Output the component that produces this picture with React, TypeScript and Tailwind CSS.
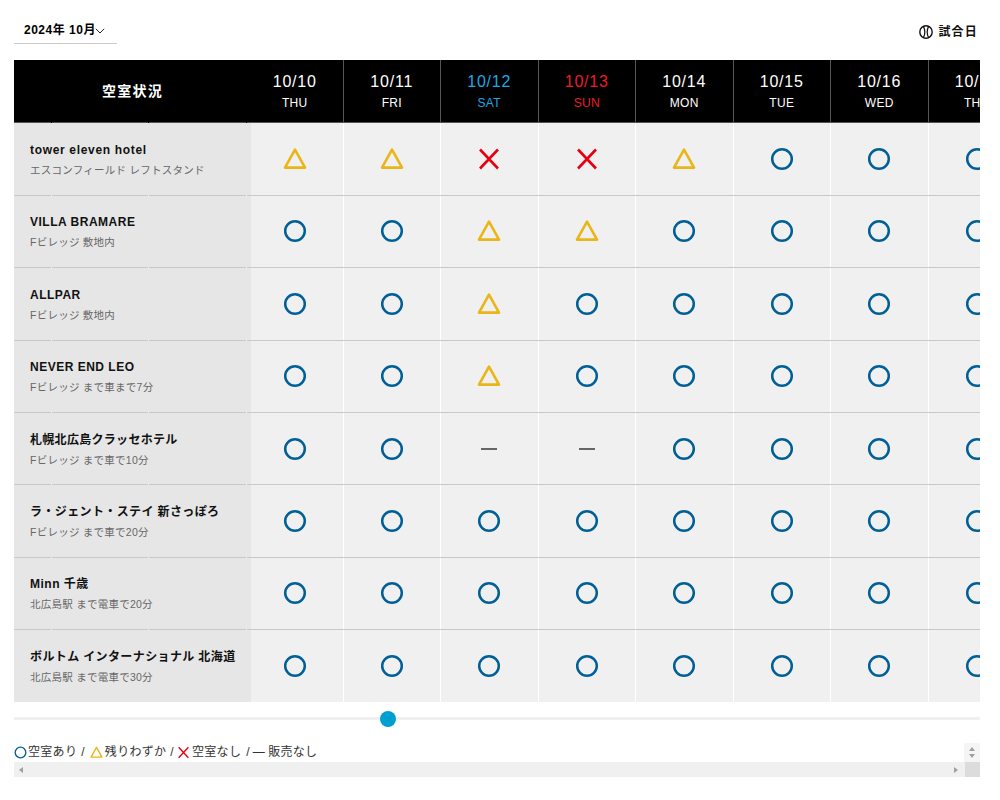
import React from 'react';

const FONT = "font-['Liberation_Sans','Noto_Sans_CJK_JP',sans-serif]";

type S = 'o' | 't' | 'x' | '-';

const days = [
  { d: '10/10', w: 'THU', c: 'text-white' },
  { d: '10/11', w: 'FRI', c: 'text-white' },
  { d: '10/12', w: 'SAT', c: 'text-[#1fa8e6]' },
  { d: '10/13', w: 'SUN', c: 'text-[#ee1c25]' },
  { d: '10/14', w: 'MON', c: 'text-white' },
  { d: '10/15', w: 'TUE', c: 'text-white' },
  { d: '10/16', w: 'WED', c: 'text-white' },
  { d: '10/17', w: 'THU', c: 'text-white' },
];

const hotels: { name: string; sub: string; t: string; s: S[] }[] = [
  { name: 'tower eleven hotel', t: 'tracking-[0.67px]', sub: 'エスコンフィールド レフトスタンド', s: ['t', 't', 'x', 'x', 't', 'o', 'o', 'o'] },
  { name: 'VILLA BRAMARE', t: 'tracking-[0.5px]', sub: 'Fビレッジ 敷地内', s: ['o', 'o', 't', 't', 'o', 'o', 'o', 'o'] },
  { name: 'ALLPAR', t: 'tracking-[0.5px]', sub: 'Fビレッジ 敷地内', s: ['o', 'o', 't', 'o', 'o', 'o', 'o', 'o'] },
  { name: 'NEVER END LEO', t: 'tracking-[0.5px]', sub: 'Fビレッジ まで車まで7分', s: ['o', 'o', 't', 'o', 'o', 'o', 'o', 'o'] },
  { name: '札幌北広島クラッセホテル', t: 'tracking-[0.3px]', sub: 'Fビレッジ まで車で10分', s: ['o', 'o', '-', '-', 'o', 'o', 'o', 'o'] },
  { name: 'ラ・ジェント・ステイ 新さっぽろ', t: 'tracking-[0.38px]', sub: 'Fビレッジ まで車で20分', s: ['o', 'o', 'o', 'o', 'o', 'o', 'o', 'o'] },
  { name: 'Minn 千歳', t: 'tracking-[0.5px]', sub: '北広島駅 まで電車で20分', s: ['o', 'o', 'o', 'o', 'o', 'o', 'o', 'o'] },
  { name: 'ボルトム インターナショナル 北海道', t: 'tracking-[0.38px]', sub: '北広島駅 まで電車で30分', s: ['o', 'o', 'o', 'o', 'o', 'o', 'o', 'o'] },
];

function Mark({ s, size = 24 }: { s: S; size?: number }) {
  if (s === 'o')
    return (
      <svg width={size} height={size} viewBox="0 0 24 24" fill="none" className="block">
        <circle cx="12" cy="12" r="9.8" stroke="#005f96" strokeWidth="2.5" />
      </svg>
    );
  if (s === 't')
    return (
      <svg width={size} height={size} viewBox="0 0 24 24" fill="none" className="block">
        <path d="M12 2.6 L22 20.6 H2 Z" stroke="#eab516" strokeWidth="2.6" strokeLinejoin="round" />
      </svg>
    );
  if (s === 'x')
    return (
      <svg width={size} height={size} viewBox="0 0 24 24" fill="none" className="block">
        <path d="M3 2.5 L21 21.5 M21 2.5 L3 21.5" stroke="#e60012" strokeWidth="2.6" />
      </svg>
    );
  return <div className="w-[16px] h-[2px] bg-[#666]" />;
}

function Ball() {
  return (
    <svg width="14" height="14" viewBox="0 0 14 14" fill="none" className="block">
      <circle cx="7" cy="7" r="6.2" stroke="#111" strokeWidth="1.4" />
      <path d="M4.4 1.4 C6 4.5 6 9.5 4.4 12.6 M9.6 1.4 C8 4.5 8 9.5 9.6 12.6" stroke="#111" strokeWidth="1.2" />
    </svg>
  );
}

function Ticks({ c }: { c: string }) {
  return (
    <div className="absolute left-0 right-0 -bottom-px h-px">
      <div className={`absolute left-[37px] top-0 w-px h-px ${c}`} />
      <div className={`absolute left-[134px] top-0 w-px h-px ${c}`} />
      <div className={`absolute left-[232px] top-0 w-px h-px ${c}`} />
    </div>
  );
}

export default function App() {
  return (
    <div className={`${FONT} w-[1000px] h-[800px] bg-white overflow-hidden pl-[14px] pr-[20px] text-[#111]`}>
      <div className="flex items-start justify-between h-[60px]">
        <div className="w-[103px] h-[44px] border-b border-[#ccc] pl-[10px] pt-[17px] flex items-center font-bold text-[12px] tracking-[0.5px] text-black">
          <span className="leading-[16px]">2024年 10月</span>
          <svg width="10" height="6" viewBox="0 0 10 6" fill="none" className="ml-[-0.5px] mt-[2px]">
            <path d="M0.8 0.8 L5 5 L9.2 0.8" stroke="#222" strokeWidth="1" />
          </svg>
        </div>
        <div className="flex items-center gap-[5px] font-bold text-[12px] tracking-[1.2px] mt-[24px] mr-[2px]">
          <Ball />
          <span className="leading-[16px]">試合日</span>
        </div>
      </div>

      <div className="overflow-hidden">
        <div className="flex w-[1100px] h-[63.4px] bg-black border-b border-[#555]">
          <div className="relative w-[237px] shrink-0 flex items-center justify-center text-white font-bold text-[14px] tracking-[1.3px]">
            空室状況
            <Ticks c="bg-black" />
          </div>
          {days.map((d, i) => (
            <div
              key={d.d}
              className={`shrink-0 flex flex-col items-center border-r border-[#555] pt-[12px] ${d.c} ${
                i === 0 ? 'w-[92.5px] pr-[4px]' : 'w-[97.5px]'
              }`}
            >
              <div className="text-[16px] leading-[20px] tracking-[0.8px]">{d.d}</div>
              <div className="text-[12px] leading-[14px] mt-[4px] tracking-[0.3px]">{d.w}</div>
            </div>
          ))}
        </div>

        {hotels.map((h, r) => (
          <div key={h.name} className={`flex w-[1100px] ${r < 7 ? 'h-[72.4px] border-b border-[#c8c8c8]' : 'h-[72px]'}`}>
            <div className="relative w-[237px] shrink-0 bg-[#e6e6e6] pl-[16px] pt-[1px] flex flex-col justify-center">
              <div className={`font-bold text-[12px] leading-[16px] text-[#111] whitespace-nowrap ${h.t}`}>{h.name}</div>
              <div className="text-[10.5px] leading-[14px] mt-[5px] tracking-[0.25px] text-[#666] whitespace-nowrap">{h.sub}</div>
              {r < 7 && <Ticks c="bg-[#f2f2f2]" />}
            </div>
            {h.s.map((s, i) => (
              <div
                key={i}
                className={`shrink-0 bg-[#f0f0f0] border-r border-white flex items-center justify-center ${
                  i === 0 ? 'w-[92.5px] pr-[4px]' : 'w-[97.5px]'
                }`}
              >
                <Mark s={s} />
              </div>
            ))}
          </div>
        ))}
      </div>

      <div className="relative mt-[15px] h-[3px] bg-[#f0f0f0]">
        <div className="absolute left-[366px] -top-[6px] w-[16px] h-[16px] rounded-full bg-[#009fd1]" />
      </div>

      <div className="relative mt-[23px] h-[34px]">
        <div className="flex items-center h-[19px] pb-[1px] text-[12px] text-[#333] tracking-[0.3px] whitespace-nowrap">
          <span className="mr-[1px]"><Mark s="o" size={13} /></span>
          <span>空室あり</span>
          <span className="ml-[4px]">/</span>
          <span className="ml-[5px] mr-[2px]"><Mark s="t" size={13} /></span>
          <span>残りわずか</span>
          <span className="ml-[4px]">/</span>
          <span className="ml-[3px] mr-[2px]"><Mark s="x" size={13} /></span>
          <span>空室なし</span>
          <span className="ml-[5px]">/</span>
          <span className="ml-[3px]">—</span>
          <span className="ml-[3px]">販売なし</span>
        </div>
        <div className="absolute right-0 top-0 w-[16px] h-[19px] bg-[#f5f5f5] flex flex-col items-center justify-center gap-[3px]">
          <div className="w-0 h-0 border-x-[3.5px] border-x-transparent border-b-[4px] border-b-[#a0a0a0]" />
          <div className="w-0 h-0 border-x-[3.5px] border-x-transparent border-t-[4px] border-t-[#a0a0a0]" />
        </div>
        <div className="flex h-[15px] bg-[#f0f0f0] items-center justify-between">
          <div className="w-0 h-0 ml-[5px] border-y-[3.5px] border-y-transparent border-r-[4px] border-r-[#a0a0a0]" />
          <div className="flex items-center">
            <div className="w-0 h-0 mr-[7px] border-y-[3.5px] border-y-transparent border-l-[4px] border-l-[#a0a0a0]" />
            <div className="w-[15px] h-[15px] bg-[#dcdcdc]" />
          </div>
        </div>
      </div>
    </div>
  );
}
